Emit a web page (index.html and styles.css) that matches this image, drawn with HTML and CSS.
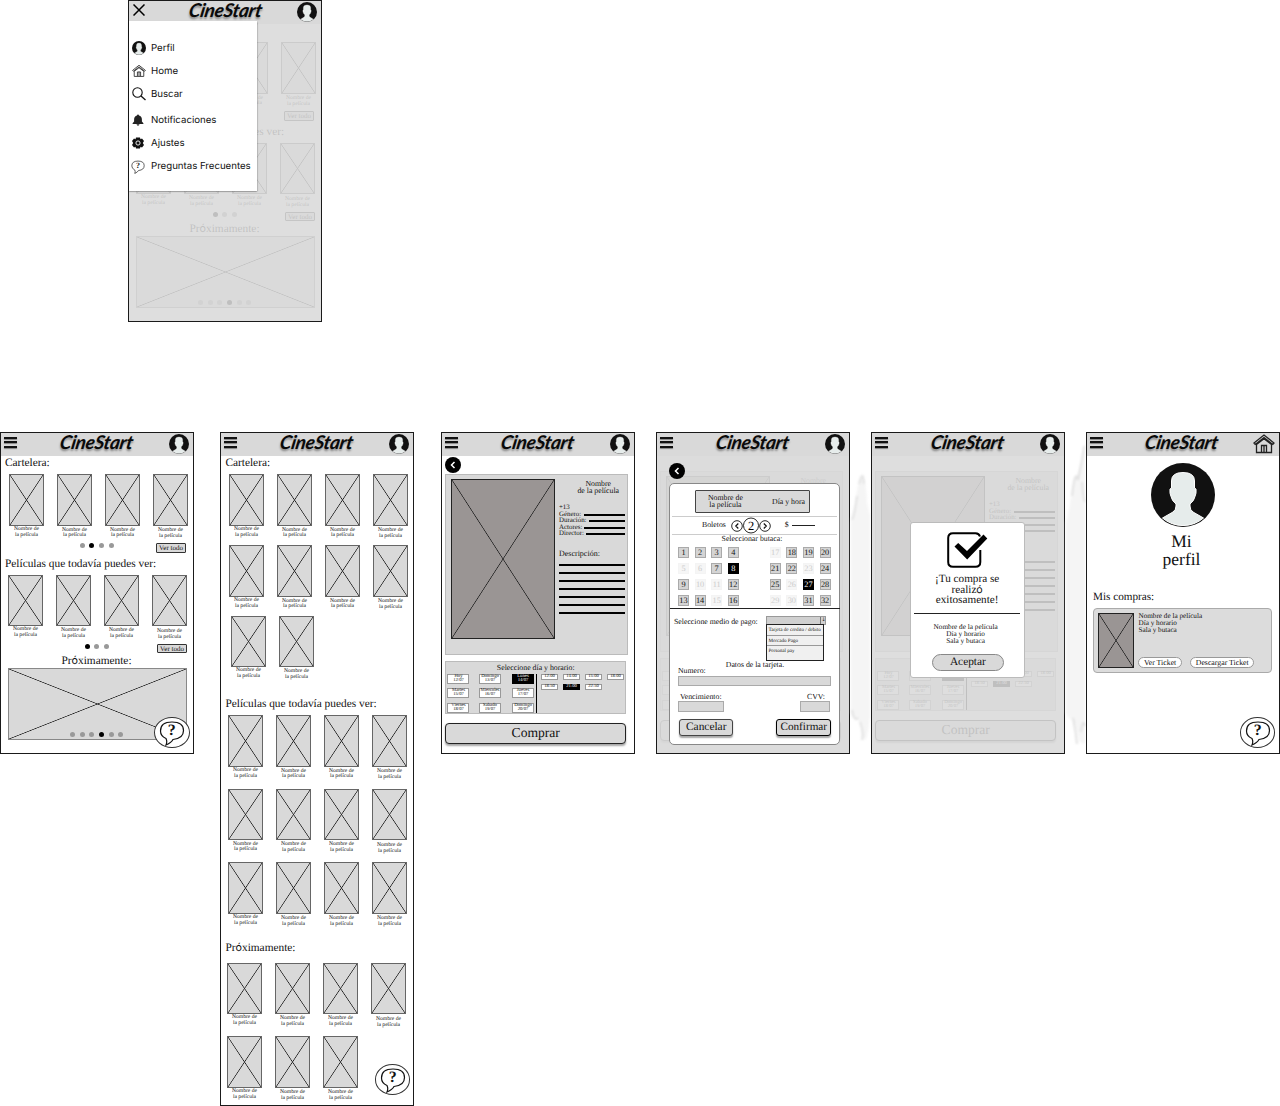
FILE: index.html
```html
<!DOCTYPE html>
<html lang="es">
<head>
<meta charset="utf-8">
<title>CineStart</title>
<link rel="stylesheet" href="styles.css">
</head>
<body>
<svg class="sprite">
  <symbol id="avatar" viewBox="0 0 64 64">
    <circle cx="32" cy="32" r="32" fill="#111"/>
    <path d="M11.500 55 L22 49 Q25 47 25 43 V41 Q21 38 20 33.500 Q18.500 30.500 19 26 L20.500 25 V18 Q20.500 9.500 32 9.500 Q43.500 9.500 43.500 18 V25 L45 26 Q45.500 30.500 44 33.500 Q43 38 39 41 V43 Q39 47 42 49 L52.500 55 A31.500 31.500 0 0 1 11.500 55 Z" fill="#e6eceb" stroke="#fff" stroke-width="1"/>
  </symbol>
  <symbol id="home" viewBox="0 0 22 20">
    <path d="M1 9 L11 1 L21 9 L19.800 10.400 L11 3.600 L2.200 10.400 Z M3.500 10.500 V18.500 H18.500 V10.500 M8.500 18 V11.500 H13.500 V18 M11 11.500 V18 M3.500 10.500 L11 4.800 L18.500 10.500" fill="none" stroke="#222" stroke-width="1.300"/>
  </symbol>
  <symbol id="search" viewBox="0 0 14 14">
    <circle cx="5.500" cy="5.500" r="4.700" fill="none" stroke="#111" stroke-width="1.100"/>
    <path d="M9 9 L13.500 13" stroke="#111" stroke-width="1.300"/>
  </symbol>
  <symbol id="bell" viewBox="0 0 12 12">
    <path d="M6 .6 Q6.900 .6 7 1.600 Q9.900 2.400 9.900 5.500 V7.600 L11.400 9.300 V9.900 H.6 V9.300 L2.100 7.600 V5.500 Q2.100 2.400 5 1.600 Q5.100 .6 6 .6 Z M4.500 10.300 H7.500 Q7.200 11.700 6 11.700 Q4.800 11.700 4.500 10.300 Z" fill="#222"/>
  </symbol>
  <symbol id="gear" viewBox="1 0 12 12">
    <path d="M5 .5 H9 L9.500 2.200 L11 1.600 L13 4 L11.800 6 L13 8 L11 10.400 L9.500 9.800 L9 11.500 H5 L4.500 9.800 L3 10.400 L1 8 L2.200 6 L1 4 L3 1.600 L4.500 2.200 Z" fill="#111"/>
    <circle cx="7" cy="6" r="2.100" fill="none" stroke="#fff" stroke-width=".9"/>
  </symbol>
  <symbol id="bubble" viewBox="0 0 26 26">
    <path d="M7 18.500 Q1.500 16 1.500 11 Q1.500 2 13 2 Q24.500 2 24.500 10.500 Q24.500 18.500 14 19.500 Q12.500 22.500 7 25 Q8.500 21.500 7 18.500 Z" fill="#fff" stroke="#111" stroke-width="1.200"/>
  </symbol>
  <symbol id="check" viewBox="0 0 41 36">
    <path d="M33 4.500 Q32 1.200 28.500 1.200 H6 Q1.200 1.200 1.200 6 V30 Q1.200 34.800 6 34.800 H28.500 Q33.300 34.800 33.300 30 V18" fill="none" stroke="#000" stroke-width="2"/>
    <path d="M7.500 14.500 L11.200 11 L20 19 L36.500 2.500 L40.300 6.400 L20.200 27.500 Z" fill="#000"/>
  </symbol>
  <symbol id="back" viewBox="0 0 16 16">
    <circle cx="8" cy="8" r="8" fill="#000"/>
    <path d="M9.500 5 L6.500 8 L9.500 11" fill="none" stroke="#fff" stroke-width="1.500"/>
  </symbol>
</svg>

<main class="board">
<div class="row row-top">
  <section class="frame">
    <header class="bar">
      <svg class="close" viewBox="0 0 12 12"><path d="M.5 .5 L11.500 11.500 M11.500 .5 L.5 11.500" stroke="#000" stroke-width="1.500"/></svg>
      <span class="logo">CineStart</span><svg class="user"><use href="#avatar"/></svg>
    </header>
    <div class="home">
      <h2>Cartelera:</h2>
      <div class="movies">
        <figure><i></i><figcaption>Nombre de<br>la película</figcaption></figure><figure><i></i><figcaption>Nombre de<br>la película</figcaption></figure><figure><i></i><figcaption>Nombre de<br>la película</figcaption></figure><figure><i></i><figcaption>Nombre de<br>la película</figcaption></figure>
      </div>
      <div class="pager"><span class="dots"><b></b><b class="on"></b><b></b><b></b></span><span class="more">Ver todo</span></div>
      <h2>Películas que todavía puedes ver:</h2>
      <div class="movies second">
        <figure><i></i><figcaption>Nombre de<br>la película</figcaption></figure><figure><i></i><figcaption>Nombre de<br>la película</figcaption></figure><figure><i></i><figcaption>Nombre de<br>la película</figcaption></figure><figure><i></i><figcaption>Nombre de<br>la película</figcaption></figure>
      </div>
      <div class="pager low"><span class="dots"><b class="on"></b><b></b><b></b></span><span class="more">Ver todo</span></div>
      <h2 class="next">Pr<span class="o">ó</span>ximamente:</h2>
      <div class="banner"><span class="dots"><b></b><b></b><b></b><b class="on"></b><b></b><b></b></span></div>
    </div>
    <div class="veil"></div>
    <nav class="drawer">
      <a><svg><use href="#avatar"/></svg>Perfil</a>
      <a><svg><use href="#home"/></svg>Home</a>
      <a><svg><use href="#search"/></svg>Buscar</a>
      <a class="gap"><svg class="small"><use href="#bell"/></svg>Notificaciones</a>
      <a><svg class="small"><use href="#gear"/></svg>Ajustes</a>
      <a><span class="mini"><svg><use href="#bubble"/></svg><em>?</em></span>Preguntas Frecuentes</a>
    </nav>
  </section>
</div>

<div class="row row-flow">
  <section class="frame">
    <header class="bar"><span class="burger"><b></b><b></b><b></b></span><span class="logo">CineStart</span><svg class="user"><use href="#avatar"/></svg></header>
    <div class="home">
      <h2>Cartelera:</h2>
      <div class="movies">
        <figure><i></i><figcaption>Nombre de<br>la película</figcaption></figure><figure><i></i><figcaption>Nombre de<br>la película</figcaption></figure><figure><i></i><figcaption>Nombre de<br>la película</figcaption></figure><figure><i></i><figcaption>Nombre de<br>la película</figcaption></figure>
      </div>
      <div class="pager"><span class="dots"><b></b><b class="on"></b><b></b><b></b></span><span class="more">Ver todo</span></div>
      <h2>Películas que todavía puedes ver:</h2>
      <div class="movies second">
        <figure><i></i><figcaption>Nombre de<br>la película</figcaption></figure><figure><i></i><figcaption>Nombre de<br>la película</figcaption></figure><figure><i></i><figcaption>Nombre de<br>la película</figcaption></figure><figure><i></i><figcaption>Nombre de<br>la película</figcaption></figure>
      </div>
      <div class="pager low"><span class="dots"><b class="on"></b><b></b><b></b></span><span class="more">Ver todo</span></div>
      <h2 class="next">Pr<span class="o">ó</span>ximamente:</h2>
      <div class="banner"><span class="dots"><b></b><b></b><b></b><b class="on"></b><b></b><b></b></span></div>
    </div>
    <div class="help"><svg><use href="#bubble"/></svg><em>?</em></div>
  </section>

  <section class="frame tall">
    <header class="bar"><span class="burger"><b></b><b></b><b></b></span><span class="logo">CineStart</span><svg class="user"><use href="#avatar"/></svg></header>
    <div class="home">
      <h2>Cartelera:</h2>
      <div class="movies list">
        <figure><i></i><figcaption>Nombre de<br>la película</figcaption></figure><figure><i></i><figcaption>Nombre de<br>la película</figcaption></figure><figure><i></i><figcaption>Nombre de<br>la película</figcaption></figure><figure><i></i><figcaption>Nombre de<br>la película</figcaption></figure>
        <figure><i></i><figcaption>Nombre de<br>la película</figcaption></figure><figure><i></i><figcaption>Nombre de<br>la película</figcaption></figure><figure><i></i><figcaption>Nombre de<br>la película</figcaption></figure><figure><i></i><figcaption>Nombre de<br>la película</figcaption></figure>
      </div>
      <div class="movies list third">
        <figure><i></i><figcaption>Nombre de<br>la película</figcaption></figure><figure><i></i><figcaption>Nombre de<br>la película</figcaption></figure>
      </div>
      <h2 class="mid">Películas que todavía puedes ver:</h2>
      <div class="movies list wide">
        <figure><i></i><figcaption>Nombre de<br>la película</figcaption></figure><figure><i></i><figcaption>Nombre de<br>la película</figcaption></figure><figure><i></i><figcaption>Nombre de<br>la película</figcaption></figure><figure><i></i><figcaption>Nombre de<br>la película</figcaption></figure>
        <figure><i></i><figcaption>Nombre de<br>la película</figcaption></figure><figure><i></i><figcaption>Nombre de<br>la película</figcaption></figure><figure><i></i><figcaption>Nombre de<br>la película</figcaption></figure><figure><i></i><figcaption>Nombre de<br>la película</figcaption></figure>
        <figure><i></i><figcaption>Nombre de<br>la película</figcaption></figure><figure><i></i><figcaption>Nombre de<br>la película</figcaption></figure><figure><i></i><figcaption>Nombre de<br>la película</figcaption></figure><figure><i></i><figcaption>Nombre de<br>la película</figcaption></figure>
      </div>
      <h2 class="last">Pr<span class="o">ó</span>ximamente:</h2>
      <div class="movies list wide soon">
        <figure><i></i><figcaption>Nombre de<br>la película</figcaption></figure><figure><i></i><figcaption>Nombre de<br>la película</figcaption></figure><figure><i></i><figcaption>Nombre de<br>la película</figcaption></figure><figure><i></i><figcaption>Nombre de<br>la película</figcaption></figure>
        <figure><i></i><figcaption>Nombre de<br>la película</figcaption></figure><figure><i></i><figcaption>Nombre de<br>la película</figcaption></figure><figure><i></i><figcaption>Nombre de<br>la película</figcaption></figure>
      </div>
    </div>
    <div class="help"><svg><use href="#bubble"/></svg><em>?</em></div>
  </section>

  <section class="frame detail-frame">
    <header class="bar"><span class="burger"><b></b><b></b><b></b></span><span class="logo">CineStart</span><svg class="user"><use href="#avatar"/></svg></header>
    <div class="detail">
      <svg class="back"><use href="#back"/></svg>
      <div class="panel">
        <div class="poster"></div>
        <div class="facts">
          <h3>Nombre<br>de la película</h3>
          <p>+13</p><p>Género:<s></s></p><p>Duración:<s></s></p><p>Actores:<s></s></p><p>Director:<s></s></p>
          <h4>Descripción:</h4>
          <div class="lines"><s></s><s></s><s></s><s></s><s></s><s></s><s></s></div>
        </div>
      </div>
      <div class="schedule">
        <h3>Seleccione día y horario:</h3>
        <div class="slots">
          <div class="days"><span>Hoy<br>12/07</span><span>Domingo<br>13/07</span><span class="on">Lunes<br>14/07</span><span>Martes<br>15/07</span><span>Miercoles<br>16/07</span><span>Jueves<br>17/07</span><span>Viernes<br>18/07</span><span>Sabado<br>19/07</span><span>Domingo<br>20/07</span></div>
          <div class="hours"><span>12:00</span><span>14:00</span><span>15:00</span><span>18:00</span><span>18:50</span><span class="on">21:00</span><span>22:50</span></div>
        </div>
      </div>
      <div class="buy">Comprar</div>
    </div>
  </section>

  <section class="frame">
    <header class="bar"><span class="burger"><b></b><b></b><b></b></span><span class="logo">CineStart</span><svg class="user"><use href="#avatar"/></svg></header>
    <div class="detail ghost">
      <div class="panel">
        <div class="poster"></div>
        <div class="facts">
          <h3>Nombre</h3>
          <p></p><p><s></s></p><p><s></s></p><p><s></s></p><p><s></s></p>
          <h4></h4>
          <div class="lines"><s></s><s></s><s></s><s></s><s></s><s></s><s></s></div>
        </div>
      </div>
      <div class="schedule"><h3></h3>
        <div class="slots"><div class="days"><span></span><span></span><span></span><span></span><span></span><span></span><span></span><span></span><span></span></div></div>
      </div>
      <div class="buy"></div>
    </div>
    <div class="veil strong"></div>
    <div class="checkout">
      <div class="pick"><span>Nombre de<br>la película</span><span>Día y hora</span></div>
      <div class="tickets">
        <span>Boletos</span>
        <svg viewBox="0 0 42 17"><g fill="none" stroke="#111" stroke-width=".9"><circle cx="7" cy="9" r="5.300"/><circle cx="21" cy="8.500" r="7.500"/><circle cx="35" cy="9" r="5.300"/><path d="M8.300 6.500 L5.800 9 L8.300 11.500 M33.800 6.500 L36.300 9 L33.800 11.500" stroke-width="1.200"/></g><text x="21" y="13" text-anchor="middle">2</text></svg>
        <span class="price">$</span><s></s>
      </div>
      <h3>Seleccionar butaca:</h3>
      <div class="hall">
        <div class="seats"><b>1</b><b>2</b><b>3</b><b>4</b><b class="off">5</b><b class="off">6</b><b>7</b><b class="on">8</b><b>9</b><b class="off">10</b><b class="off">11</b><b>12</b><b>13</b><b>14</b><b class="off">15</b><b>16</b></div>
        <div class="seats"><b class="off">17</b><b>18</b><b>19</b><b>20</b><b>21</b><b>22</b><b class="off">23</b><b>24</b><b>25</b><b class="off">26</b><b class="on">27</b><b>28</b><b class="off">29</b><b class="off">30</b><b>31</b><b>32</b></div>
      </div>
      <div class="pay">
        <label>Seleccione medio de pago:</label>
        <div class="select"><div class="field"><i>↓</i></div>
          <ul><li>Tarjeta de credito / debito</li><li>Mercado Pago</li><li>Personal pay</li></ul></div>
      </div>
      <h3 class="card-title">Datos de la tarjeta.</h3>
      <div class="number"><label>Numero:</label><div class="input"></div></div>
      <div class="codes"><div><label>Vencimiento:</label><div class="input"></div></div><div class="cvv"><label>CVV:</label><div class="input"></div></div></div>
      <div class="actions"><span>Cancelar</span><span class="primary">Confirmar</span></div>
    </div>
    <svg class="back over"><use href="#back"/></svg>
  </section>

  <svg class="gutter" viewBox="0 0 21 322"><path d="M1 91 Q4 80 6 64 Q9 44 13 42 Q16 48 17 70 Q19 80 20 84 V285 Q17 310 14 308 Q11 290 8 288 Q4 288 1 281 Z"/><path class="smear" d="M2 88 Q5 80 7 64 M9 52 Q13 36 14 52 M2 278 Q4 290 8 286 M10 290 Q14 300 12 308"/></svg>

  <section class="frame flush">
    <header class="bar"><span class="burger"><b></b><b></b><b></b></span><span class="logo">CineStart</span><svg class="user"><use href="#avatar"/></svg></header>
    <div class="detail ghost">
      <div class="panel">
        <div class="poster"></div>
        <div class="facts">
          <h3>Nombre<br>de la película</h3>
          <p>+13</p><p>Género:<s></s></p><p>Duración:<s></s></p><p><s></s></p><p><s></s></p>
          <h4></h4>
          <div class="lines"><s></s><s></s><s></s><s></s><s></s><s></s><s></s></div>
        </div>
      </div>
      <div class="schedule">
        <h3></h3>
        <div class="slots">
          <div class="days"><span>Hoy<br>12/07</span><span></span><span class="on"></span><span>Martes<br>15/07</span><span>Miercoles<br>16/07</span><span>Jueves<br>17/07</span><span>Viernes<br>18/07</span><span>Sabado<br>19/07</span><span>Domingo<br>20/07</span></div>
          <div class="hours"><span></span><span></span><span>15:00</span><span>18:00</span><span>18:50</span><span class="on">21:00</span><span>22:50</span></div>
        </div>
      </div>
      <div class="buy">Comprar</div>
    </div>
    <div class="veil"></div>
    <div class="success">
      <svg><use href="#check"/></svg>
      <h2>¡Tu compra se<br>realiz<span class="o">ó</span><br>exitosamente!</h2>
      <hr>
      <p>Nombre de la película<br>Día y horario<br>Sala y butaca</p>
      <span class="accept">Aceptar</span>
    </div>
  </section>

  <svg class="gutter" viewBox="0 0 21 322"><path d="M1 91 Q4 80 6 64 Q9 44 13 42 Q16 28 20 10 V310 Q17 314 14 308 Q11 290 8 288 Q4 288 1 281 Z"/><path class="smear" d="M7 64 Q10 36 13 48 Q17 30 19 14 M17 50 Q18 66 20 70 M8 286 Q11 300 12 312 M16 300 Q18 285 20 294"/></svg>

  <section class="frame flush">
    <header class="bar"><span class="burger"><b></b><b></b><b></b></span><span class="logo">CineStart</span><svg class="house"><use href="#home"/></svg></header>
    <div class="profile">
      <svg class="face"><use href="#avatar"/></svg>
      <h1>Mi<br>perfil</h1>
      <h2>Mis compras:</h2>
      <div class="ticket">
        <div class="poster"></div>
        <div class="info">
          <p>Nombre de la película<br>Día y horario<br>Sala y butaca</p>
          <div class="links"><span>Ver Ticket</span><span>Descargar Ticket</span></div>
        </div>
      </div>
    </div>
    <div class="help"><svg><use href="#bubble"/></svg><em>?</em></div>
  </section>
</div>
</main>
</body>
</html>
```
FILE: styles.css
```css
* { box-sizing: border-box; margin: 0; padding: 0; }
body {
  width: 1280px; height: 1106px; overflow: hidden; background: #fff; color: #111;
  font-family: "Liberation Serif", serif; text-rendering: geometricPrecision;
}
h1, h2, h3, h4 { font-weight: normal; }
s, em { text-decoration: none; font-style: normal; }
.sprite { display: none; }
svg { display: block; flex: none; }
.board { height: 1106px; overflow: hidden; }
.row { display: flex; align-items: flex-start; }
.row-top { height: 432px; padding-left: 128px; }

.frame {
  position: relative; flex: none; width: 194px; height: 322px; background: #fff;
  outline: 1.500px solid #1a1a1a; outline-offset: -1px;
}
.row-flow .frame + .frame { margin-left: 21px; }
.row-flow .frame.tall { margin-left: 26.400px; height: 674px; }
.row-flow .frame.detail-frame { margin-left: 26.600px; }

/* top bar */
.bar {
  display: flex; justify-content: space-between; align-items: center;
  height: 23.500px; padding: 0 5px 0 4px; background: #d9d9d9;
}
.burger { display: flex; flex-direction: column; gap: 2.900px; width: 20px; margin-top: -3px; }
.burger b { width: 13px; height: 1.700px; background: #111; box-shadow: 0 1px 1px rgba(0,0,0,.4); }
.close { width: 12px; height: 12px; margin: -3px 8px 0 1px; }
.logo {
  font: italic 700 19px/20px Lato, sans-serif; letter-spacing: -.3px; color: #0a0a0a;
  transform: skewX(-10deg); text-shadow: 0 2px 2px rgba(0,0,0,.35); margin-top: -2px;
}
.user { width: 20px; height: 20px; margin-top: 1px; }
.house { width: 22px; height: 20px; margin-top: 1px; }

/* movie listing */
.home { padding: 0 5px; }
.home h2, .profile h2 { font-size: 11.350px; line-height: 15px; height: 18.500px; white-space: nowrap; }
.o { font-family: Inter, sans-serif; font-size: .95em; }
.movies { display: grid; grid-template-columns: repeat(4, 35px); column-gap: 13px; margin-left: 4px; }
.movies.second { margin-left: 3px; }
.movies figure { height: 63px; }
.movies i, .banner, .poster {
  display: block; border: 1px solid #666; background-color: #d9d9d9;
  background-image:
    linear-gradient(to top right, transparent calc(50% - .7px), #222 50%, transparent calc(50% + .7px)),
    linear-gradient(to bottom right, transparent calc(50% - .7px), #222 50%, transparent calc(50% + .7px));
}
.movies i { height: 51.500px; }
figcaption { padding-top: 1.400px; font-size: 5.600px; line-height: 5.900px; text-align: center; white-space: nowrap; }
figure:nth-child(4n) figcaption { padding-top: 2.600px; }
figure:nth-child(4n+2) figcaption, figure:nth-child(4n+3) figcaption { padding-top: 2px; }
.pager { display: flex; justify-content: space-between; height: 10px; margin: 6px 3px 3px 74.500px; }
.pager + h2 { line-height: 16px; }
.pager.low { margin: 6px 2px 1px 79.500px; }
.dots { display: flex; gap: 4.700px; }
.dots b { width: 5px; height: 5px; border-radius: 50%; background: #999; }
.dots b.on { background: #000; }
.more { width: 30px; height: 9.500px; border: 1px solid #333; border-radius: 1px; background: #d9d9d9; font-size: 7px; line-height: 8px; text-align: center; white-space: nowrap; }
.home h2.next { height: 13px; line-height: 11px; text-align: center; padding-right: 1px; }
.banner { width: 179px; height: 72.500px; margin-left: 3px; border-color: #888; padding: 63.500px 0 0 61px; }

.tall .movies { margin-left: 3.600px; }
.tall .list figure { height: 71px; }
.tall .movies.third { margin-left: 5.600px; }
.tall .movies.wide { margin-left: 2.600px; }
.tall .wide figure { height: 73.700px; }
.tall .third i { height: 51px; }
.home h2.mid { margin-top: 9px; height: 19px; line-height: 16px; }
.home h2.last { margin-top: 4px; height: 22.500px; line-height: 16px; }
.tall .movies.soon { margin-left: 1.600px; }

/* floating help button */
.help {
  position: absolute; right: 4.500px; bottom: 6px; width: 35.500px; height: 31px;
  display: grid; place-items: center; border: 1px solid #333; border-radius: 50%; background: #fff;
}
.tall .help { bottom: 11px; right: 4px; }
.help svg { grid-area: 1/1; width: 26px; height: 26px; }
.help em { grid-area: 1/1; font: bold 16px/16px "Liberation Serif", serif; margin-top: -4px; }

/* drawer */
.veil { position: absolute; inset: 23.500px 1px 1px; background: rgba(217,217,217,.88); }
.veil.strong { background: rgba(217,217,217,.93); }
.drawer {
  position: absolute; left: 1px; top: 21px; width: 128px; height: 170px; padding-top: 15.500px;
  background: #fff; box-shadow: 0 .5px 1.500px rgba(0,0,0,.7);
  font: 9.700px/23px Inter, sans-serif; letter-spacing: -.03px;
}
.drawer a { display: flex; align-items: center; height: 23.200px; padding-left: 3px; gap: 5px; white-space: nowrap; }
.drawer a.gap { margin-top: 2.500px; }
.drawer svg { width: 14px; height: 14px; }
.drawer svg.small { width: 12px; height: 12px; margin: 0 2px 0 0; }
.mini { display: grid; place-items: center; width: 14px; margin-left: -1px; margin-right: 1px; }
.mini svg, .mini em { grid-area: 1/1; }
.mini em { font: bold 8px/8px "Liberation Serif", serif; margin-top: -2px; }

/* movie detail */
.detail { padding: 1.500px 5px 0 4px; }
.back { width: 16px; height: 16px; }
.detail > .back { margin-left: .5px; }
.panel { display: flex; width: 183.500px; height: 180.500px; margin-top: 1px; padding: 4px 2px 0 5px; border: 1px solid #bbb; background: #d9d9d9; }
.ghost .panel { margin-top: 14px; }
.poster { flex: none; width: 104px; height: 160px; border-color: #222; background-color: #9a9594; }
.facts { flex: 1; padding-left: 4px; font-size: 6.900px; }
.facts h3 { margin-left: 12px; font-size: 7.800px; line-height: 7.300px; text-align: center; padding-top: .5px; height: 26px; white-space: nowrap; }
.facts p { display: flex; align-items: center; height: 6.500px; line-height: 6.500px; gap: 2px; }
.facts p s { flex: 1; height: 1.600px; background: #000; max-width: 41px; margin-left: auto; }
.facts h4 { margin-top: 11px; height: 9px; font-size: 8px; line-height: 9px; }
.lines { display: flex; flex-direction: column; padding-top: 6px; }
.lines s { height: 8.100px; border-top: 1.600px solid #000; border-top-width: 2px; }
.schedule { width: 181.500px; height: 53px; margin-top: 6.500px; border: 1px solid #bbb; background: #d9d9d9; }
.schedule h3 { height: 11.500px; font-size: 7.800px; line-height: 11px; text-align: center; }
.slots { display: flex; }
.days { display: grid; grid-template-columns: 31.500px 33px 22px; row-gap: 4.500px; width: 91px; padding-left: 1.500px; height: 39px; border-right: 1px solid #000; align-content: start; }
.days span, .hours span { width: 22px; height: 10px; border: .5px solid #999; background: #fff; font-size: 4.700px; line-height: 4px; text-align: center; white-space: nowrap; }
.hours { display: grid; grid-template-columns: repeat(4, 17px); gap: 4px 5px; align-content: start; padding: .5px 0 0 4px; }
.hours span { width: 17px; height: 6px; line-height: 4.500px; }
.days .on, .hours .on { border-color: #000; background: #000; color: #fff; }
.buy { width: 181.500px; height: 21px; margin-top: 9px; border: 1px solid #222; border-radius: 4px; background: #d9d9d9; box-shadow: 0 1.500px 2px rgba(0,0,0,.35); font-size: 13.600px; line-height: 18px; text-align: center; }

/* checkout dialog */
.back.over { position: absolute; left: 13px; top: 31px; }
.checkout { position: absolute; left: 13px; top: 51.400px; width: 171px; height: 262px; border: 1px solid #888; border-radius: 5px; background: #fff; font-size: 7.800px; }
.pick { display: flex; justify-content: space-between; align-items: center; width: 115px; height: 23px; margin: 5.500px 0 3px 25px; padding: 0 4px 0 12px; border: 1px solid #444; border-radius: 1px; background: #d9d9d9; line-height: 7.300px; text-align: center; }
.tickets { display: flex; align-items: center; height: 19.500px; margin: 0 2px; padding-left: 30px; border: solid #ccc; border-width: 1px 0; }
.tickets span { padding-bottom: 1.500px; }
.tickets svg { width: 42px; height: 17px; margin: -1px 0 0 4.500px; font-size: 12.500px; }
.tickets .price { margin-left: 12.500px; }
.tickets s { width: 23px; height: 1px; margin: -1px 0 0 3px; background: #222; }
.checkout h3 { font-size: 7.800px; line-height: 8.500px; height: 9px; text-align: center; padding-right: 5px; white-space: nowrap; }
.hall { display: flex; gap: 31px; height: 65px; padding: 3px 0 0 8px; border-bottom: 1px solid #222; margin-right: -1px; }
.seats { display: grid; grid-template-columns: repeat(4, 11px); grid-auto-rows: 11px; gap: 4.900px 5.600px; }
.seats b { border: 1px solid #aaa; background: #d4d4d4; font-weight: normal; font-size: 8.300px; line-height: 9px; display: flex; justify-content: center; }
.seats .off { border-color: #f4f4f4; background: #f6f6f6; color: #ccc; }
.seats .on { border-color: #000; background: #000; color: #fff; }
.pay { display: flex; height: 53px; padding: 7px 0 0 4px; line-height: 11px; }
.pay label { width: 92.500px; white-space: nowrap; }
.field { width: 60px; height: 9px; border: 1px solid #999; background: #d0d0d0; }
.field i { display: block; width: 5px; height: 7px; margin-left: auto; border-left: 1px solid #777; font: 5px/7px "DejaVu Sans", sans-serif; }
.select ul { width: 57.500px; height: 37px; margin-top: -1px; border: 1px solid #222; background: #f0f0f0; list-style: none; font-size: 5.100px; }
.select li { height: 10.500px; padding-left: 1px; line-height: 11px; border-bottom: .5px solid #999; white-space: nowrap; }
.select li:last-child { border: 0; }
.checkout .card-title { height: 5px; padding: 0 0 0 1px; line-height: 8px; margin-top: -1px; }
.number { padding-left: 8px; line-height: 9px; }
.number .input { margin-top: .5px; }
.input { width: 153px; height: 10.500px; border: 1px solid #aaa; background: #d9d9d9; }
.codes { display: flex; justify-content: space-between; margin: 6px 9px 0 8px; line-height: 9px; }
.codes label { padding-left: 2px; }
.codes .input { width: 46px; }
.codes .cvv { width: 30px; }
.cvv label { padding-left: 7px; }
.codes .cvv .input { width: 30px; }
.actions { display: flex; justify-content: space-between; margin: 7.500px 8px 0 9px; }
.actions span { width: 54.500px; height: 17px; border: 1px solid #444; border-radius: 3px; background: #d9d9d9; box-shadow: 0 1.500px 1.500px rgba(0,0,0,.35); font-size: 11.400px; line-height: 14.500px; text-align: center; }
.actions .primary { border-color: #000; font-size: 11.200px; }

/* confirmation dialog */
.gutter { width: 21px; height: 322px; fill: #f5f5f5; filter: blur(.8px); }
.smear { fill: none; stroke: #e2e2e2; stroke-width: 2px; }
.success { position: absolute; left: 39.400px; top: 90.400px; width: 114.500px; height: 156px; border: 1px solid #bbb; border-radius: 3px; background: #fff; text-align: center; }
.success svg { width: 41px; height: 36px; margin: 8.500px 0 0 36px; }
.success h2 { margin-top: 6px; font-size: 11.200px; line-height: 10.700px; padding-right: 1px; }
.success hr { margin: 6.500px 4px 0 3px; border: 0; height: 1px; background: #222; }
.success p { margin: 10px 4px 0 0; font-size: 7.250px; line-height: 7px; }
.accept { display: block; width: 72px; height: 17px; margin: 9px 0 0 20.500px; border: 1px solid #888; border-radius: 9px; background: #d9d9d9; font-size: 11.350px; line-height: 15px; }

/* profile */
.profile { padding: 7.500px 7px 0; }
.face { width: 64px; height: 64px; margin: 0 auto; }
.profile h1 { height: 62px; padding: 6px 3px 0 0; font-size: 17.500px; line-height: 17.500px; text-align: center; }
.profile h2 { font-size: 11.200px; line-height: 16px; }
.ticket { display: flex; width: 179.500px; height: 65.500px; padding: 4.500px 4px; border: 1px solid #aaa; border-radius: 4px; background: #dcdcdc; }
.ticket .poster { width: 36.500px; height: 55px; }
.info { padding-left: 4px; font-size: 7.200px; line-height: 7px; }
.links { display: flex; gap: 8.500px; margin-top: 23px; font-size: 7.800px; line-height: 9px; }
.links span { height: 11px; padding: 0 4.500px; border: 1px solid #999; border-radius: 6px; background: #fff; white-space: nowrap; }
```
